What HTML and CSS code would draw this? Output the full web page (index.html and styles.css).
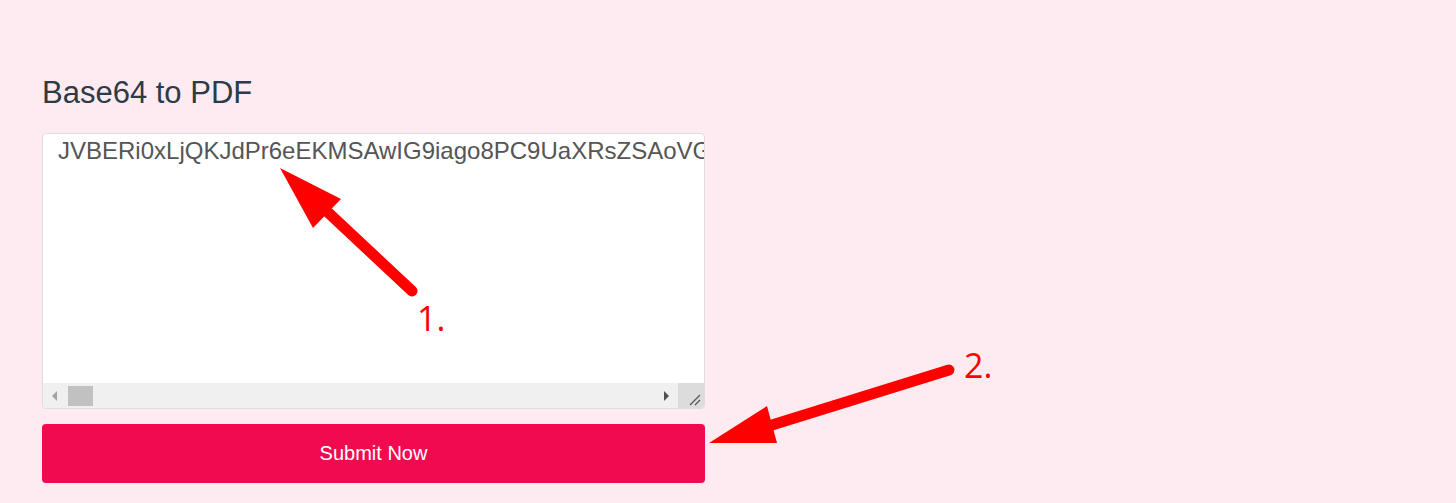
FILE: index.html
```html
<!DOCTYPE html>
<html lang="en">
<head>
<meta charset="utf-8">
<title>Base64 to PDF</title>
<link rel="stylesheet" href="styles.css">
</head>
<body>
<main class="page">
  <h1 class="title">Base64 to PDF</h1>
  <div class="textbox">
    <div class="textbox-content">JVBERi0xLjQKJdPr6eEKMSAwIG9iago8PC9UaXRsZSAoVGVzdCBQREYpCi9Qcm9kdWNlcg==</div>
    <div class="scrollbar">
      <div class="track">
        <span class="arrow arrow-left"></span>
        <span class="thumb"></span>
        <span class="spacer"></span>
        <span class="arrow arrow-right"></span>
      </div>
      <div class="resizer">
        <svg width="26" height="25" viewBox="0 0 26 25"><path d="M12 22 L22 12 M17 22 L22 17" stroke="#555" stroke-width="1.2" fill="none"/></svg>
      </div>
    </div>
  </div>
  <button class="submit" type="button">Submit Now</button>
</main>
<svg class="annotations" width="1456" height="503" viewBox="0 0 1456 503">
  <line x1="412" y1="291" x2="318" y2="203" stroke="#ff0000" stroke-width="11" stroke-linecap="round"/>
  <polygon points="280,168 341,199 313,228" fill="#ff0000"/>
  <text x="417" y="331" class="note">1.</text>
  <line x1="949" y1="370" x2="772" y2="425" stroke="#ff0000" stroke-width="11" stroke-linecap="round"/>
  <polygon points="709,443 767,406 777,443" fill="#ff0000"/>
  <text x="964" y="378" class="note">2.</text>
</svg>
</body>
</html>
```
FILE: styles.css
```css
html, body {
  margin: 0;
  padding: 0;
  background: #fdebf1;
}
body {
  position: relative;
  width: 1456px;
  height: 503px;
  overflow: hidden;
  font-family: "Liberation Sans", Arial, sans-serif;
}
.page {
  display: flex;
  flex-direction: column;
  padding: 75px 0 0 42px;
  width: 663px;
}
.title {
  margin: 0 0 22px 0;
  font-size: 31px;
  font-weight: normal;
  line-height: 36px;
  color: #2d3a48;
}
.textbox {
  box-sizing: border-box;
  width: 663px;
  height: 276px;
  background: #ffffff;
  border: 1px solid #dedede;
  border-radius: 4px;
  display: flex;
  flex-direction: column;
  overflow: hidden;
}
.textbox-content {
  flex: 1;
  padding: 3px 0 0 15px;
  font-size: 24px;
  line-height: 28px;
  color: #555555;
  white-space: nowrap;
  overflow: hidden;
}
.scrollbar {
  display: flex;
  height: 25px;
}
.track {
  flex: 1;
  display: flex;
  align-items: center;
  background: #f0f0f0;
}
.arrow {
  width: 0;
  height: 0;
  border-top: 5px solid transparent;
  border-bottom: 5px solid transparent;
}
.arrow-left {
  margin-left: 9px;
  border-right: 5px solid #a3a3a3;
}
.thumb {
  margin-left: 11px;
  width: 25px;
  height: 20px;
  background: #c1c1c1;
}
.spacer {
  flex: 1;
}
.arrow-right {
  margin-right: 9px;
  border-left: 5px solid #505050;
}
.resizer {
  width: 26px;
  height: 25px;
  background: #dcdcdc;
}
.resizer svg {
  display: block;
}
.submit {
  margin-top: 15px;
  width: 663px;
  height: 59px;
  border: none;
  border-radius: 4px;
  background: #f20a51;
  color: #ffffff;
  font-family: "Liberation Sans", Arial, sans-serif;
  font-size: 20px;
  padding: 0;
}
.annotations {
  position: absolute;
  left: 0;
  top: 0;
  pointer-events: none;
}
.note {
  fill: #ff0000;
  font-family: "Open Sans", "Noto Sans", sans-serif;
  font-size: 34px;
}
```
